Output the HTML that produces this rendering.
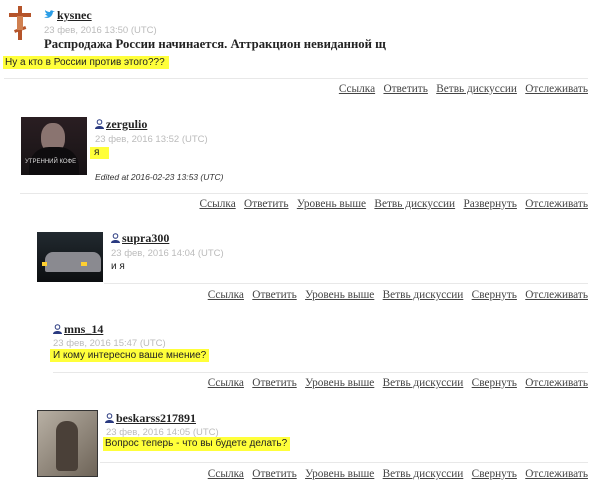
<!DOCTYPE html>
<html><head><meta charset="utf-8"><style>
body{margin:0;width:604px;height:491px;background:#fff;position:relative;overflow:hidden;font-family:"Liberation Sans","Noto Sans CJK SC",sans-serif;color:#222}
.a{position:absolute;white-space:nowrap}
.nm{font-family:"Liberation Serif",serif;font-weight:bold;font-size:12px;text-decoration:underline;color:#222}
.dt{font-size:9.5px;color:#bbb}
.tx{font-size:10px;color:#222}
.hl{background:#ffff3a}
.ln{position:absolute;height:1px;background:#e8e8e8;right:16px}
.lk{position:absolute;right:16px;font-family:"Liberation Serif",serif;font-size:11.3px;color:#444;white-space:nowrap;word-spacing:0}
.lk span{text-decoration:underline;margin-left:5.5px}
.u{display:inline-block;width:9px;height:10px;vertical-align:-1px;margin-right:2px}
.av{position:absolute}
</style></head><body>
<svg class="av" style="left:8px;top:6px" width="24" height="36" viewBox="0 0 24 36"><rect x="10" y="0" width="4" height="34" fill="#b5542a"/><rect x="1" y="7" width="22" height="4" fill="#b5542a"/><rect x="6" y="22" width="12" height="3" fill="#b5542a" transform="rotate(-20 12 23)"/><rect x="9" y="10" width="6" height="14" fill="#d08050"/></svg>
<div class="a" style="left:44px;top:6px"><svg width="11" height="9" viewBox="0 0 11 9"><path d="M0 7c3 2 8 1 9-5l2-1-2 0c-1-1-3-1-3 1C4 2 2 1 1 0c0 2 1 3 2 4H1c1 1 2 2 3 2-1 1-3 1-4 1z" fill="#2b9de6"/></svg><span class="nm" style="margin-left:2px">kysnec</span></div>
<div class="a dt" style="left:44px;top:25px">23 фев, 2016 13:50 (UTC)</div>
<div class="a" style="left:44px;top:37px;font-family:'Liberation Serif',serif;font-weight:bold;font-size:12.7px">Распродажа России начинается. Аттракцион невиданной щ</div>
<div class="a tx hl" style="left:3px;top:56px;padding:1px 4px 1px 2px">Ну а кто в России против этого???</div>
<div class="ln" style="left:4px;top:78px"></div>
<div class="lk" style="top:83px"><span>Ссылка</span> <span>Ответить</span> <span>Ветвь дискуссии</span> <span>Отслеживать</span></div>

<div class="av" style="left:21px;top:117px;width:66px;height:58px;background:linear-gradient(#2a1e22,#161214)"><div style="position:absolute;left:20px;top:6px;width:24px;height:30px;border-radius:45%;background:#8a7470"></div><div style="position:absolute;left:8px;top:30px;width:50px;height:28px;background:#0e0c0e;border-radius:20px 20px 0 0"></div><div style="position:absolute;left:4px;top:42px;font-size:6px;color:#ddd">УТРЕННИЙ КОФЕ</div></div>
<div class="a" style="left:95px;top:115px"><svg class="u" viewBox="0 0 9 10"><circle cx="4.5" cy="3" r="2.3" fill="none" stroke="#2a3a80"/><path d="M0 10c0-4 9-4 9 0z" fill="#2a3a80"/></svg><span class="nm">zergulio</span></div>
<div class="a dt" style="left:95px;top:134px">23 фев, 2016 13:52 (UTC)</div>
<div class="a tx hl" style="left:90px;top:147px;padding:0 10px 1px 4px">я</div>
<div class="a" style="left:95px;top:172px;font-size:8.5px;font-style:italic;color:#333">Edited at 2016-02-23 13:53 (UTC)</div>
<div class="ln" style="left:20px;top:193px"></div>
<div class="lk" style="top:198px"><span>Ссылка</span> <span>Ответить</span> <span>Уровень выше</span> <span>Ветвь дискуссии</span> <span>Развернуть</span> <span>Отслеживать</span></div>

<div class="av" style="left:37px;top:232px;width:66px;height:50px;background:linear-gradient(#222a30,#0c0e10)"><div style="position:absolute;left:8px;top:20px;width:56px;height:20px;background:#8a8a90;border-radius:8px 8px 2px 2px"></div><div style="position:absolute;left:5px;top:30px;width:5px;height:4px;background:#ffd030"></div><div style="position:absolute;left:44px;top:30px;width:6px;height:4px;background:#ffd030"></div></div>
<div class="a" style="left:111px;top:229px"><svg class="u" viewBox="0 0 9 10"><circle cx="4.5" cy="3" r="2.3" fill="none" stroke="#2a3a80"/><path d="M0 10c0-4 9-4 9 0z" fill="#2a3a80"/></svg><span class="nm">supra300</span></div>
<div class="a dt" style="left:111px;top:248px">23 фев, 2016 14:04 (UTC)</div>
<div class="a tx" style="left:111px;top:261px">и я</div>
<div class="ln" style="left:104px;top:283px"></div>
<div class="lk" style="top:289px"><span>Ссылка</span> <span>Ответить</span> <span>Уровень выше</span> <span>Ветвь дискуссии</span> <span>Свернуть</span> <span>Отслеживать</span></div>

<div class="a" style="left:53px;top:320px"><svg class="u" viewBox="0 0 9 10"><circle cx="4.5" cy="3" r="2.3" fill="none" stroke="#2a3a80"/><path d="M0 10c0-4 9-4 9 0z" fill="#2a3a80"/></svg><span class="nm">mns_14</span></div>
<div class="a dt" style="left:53px;top:338px">23 фев, 2016 15:47 (UTC)</div>
<div class="a tx hl" style="left:50px;top:349px;padding:1px 3px 1px 3px">И кому интересно ваше мнение?</div>
<div class="ln" style="left:53px;top:372px"></div>
<div class="lk" style="top:377px"><span>Ссылка</span> <span>Ответить</span> <span>Уровень выше</span> <span>Ветвь дискуссии</span> <span>Свернуть</span> <span>Отслеживать</span></div>

<div class="av" style="left:37px;top:410px;width:61px;height:67px;background:linear-gradient(135deg,#b8b0a4,#6e6458);border:1px solid #333;box-sizing:border-box"><div style="position:absolute;left:18px;top:10px;width:22px;height:50px;background:#4a4038;border-radius:10px 10px 4px 4px"></div></div>
<div class="a" style="left:105px;top:409px"><svg class="u" viewBox="0 0 9 10"><circle cx="4.5" cy="3" r="2.3" fill="none" stroke="#2a3a80"/><path d="M0 10c0-4 9-4 9 0z" fill="#2a3a80"/></svg><span class="nm">beskarss217891</span></div>
<div class="a dt" style="left:106px;top:427px">23 фев, 2016 14:05 (UTC)</div>
<div class="a tx hl" style="left:103px;top:437px;padding:1px 3px 2px 2px">Вопрос теперь - что вы будете делать?</div>
<div class="ln" style="left:100px;top:462px"></div>
<div class="lk" style="top:468px"><span>Ссылка</span> <span>Ответить</span> <span>Уровень выше</span> <span>Ветвь дискуссии</span> <span>Свернуть</span> <span>Отслеживать</span></div>
</body></html>
